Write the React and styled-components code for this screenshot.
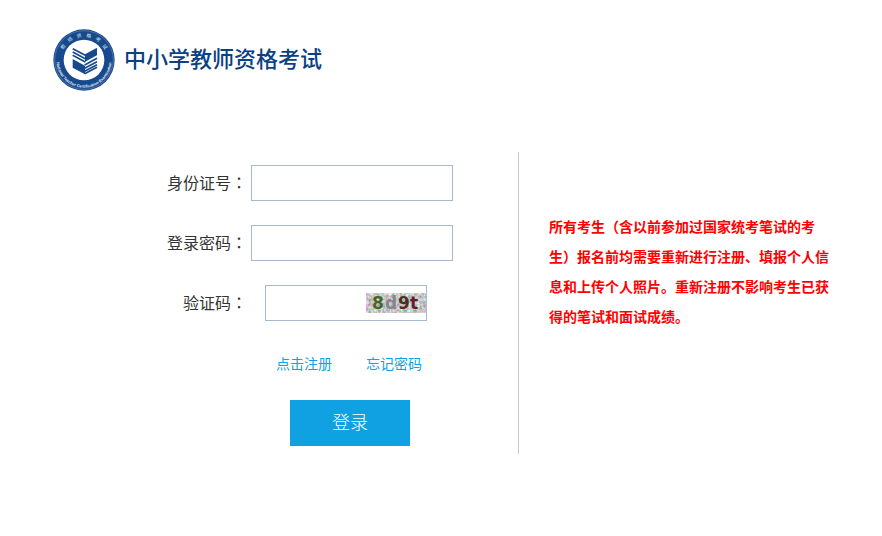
import React from "react";
import styled, { createGlobalStyle } from "styled-components";

const GlobalStyle = createGlobalStyle`
  * { box-sizing: border-box; }
  body {
    margin: 0;
    background: #fff;
    color: #333;
    font-family: "Noto Sans CJK SC", sans-serif;
    font-size: 16px;
  }
`;

const Header = styled.header`
  display: flex;
  align-items: center;
  gap: 9px;
  padding: 29px 53px 0;
`;

const Emblem = styled.svg`
  width: 62px;
  height: 62px;
  flex: none;
`;

const SiteTitle = styled.h1`
  margin: 0;
  padding-bottom: 6px;
  color: #0a4182;
  font-size: 22px;
  font-weight: 500;
  line-height: 32px;
`;

const Main = styled.main`
  display: grid;
  grid-template-columns: minmax(0, 519fr) minmax(0, 363fr);
  margin-top: 61px;
`;

const LoginForm = styled.form`
  display: flex;
  flex-direction: column;
  align-items: flex-end;
  gap: 24px;
  padding: 13px 65px 8px 16px;
  border-right: 1px solid #c8c8c8;
`;

const Field = styled.div`
  display: flex;
  align-items: center;
  gap: 4px;
  height: 36px;
`;

const Label = styled.label`
  padding-bottom: 2px;
  line-height: 24px;
  white-space: nowrap;
`;

const Colon = styled.span`
  font-family: "Noto Sans CJK TC", sans-serif;
`;

const Control = styled.div`
  display: flex;
  justify-content: ${(p) => (p.$narrow ? "center" : "flex-start")};
  width: 202px;
`;

const TextBox = styled.input`
  width: 100%;
  height: 36px;
  padding: 0 8px;
  border: 1px solid #a5bacf;
  border-radius: 0;
  background: #fff;
  font: inherit;
  outline: none;
`;

const CodeBox = styled.div`
  display: flex;
  align-items: center;
  width: 162px;
  height: 36px;
  margin-right: 12px;
  border: 1px solid #a5bacf;
`;

const CodeInput = styled.input`
  flex: 1;
  min-width: 0;
  height: 34px;
  padding: 0 8px;
  border: 0;
  background: transparent;
  font: inherit;
  outline: none;
`;

const CodeImage = styled.svg`
  width: 60px;
  height: 20px;
  flex: none;
  overflow: visible;
`;

const Actions = styled.div`
  display: flex;
  flex-direction: column;
  align-items: center;
  gap: 25px;
  width: 206px;
  padding-top: 6px;
`;

const Links = styled.nav`
  display: flex;
  gap: 34px;
  padding-right: 2px;
`;

const TextLink = styled.a`
  color: #0fa1e2;
  font-size: 14px;
  line-height: 24px;
  text-decoration: none;
`;

const SubmitButton = styled.button`
  width: 120px;
  height: 46px;
  padding: 0 0 4px;
  border: 0;
  background: #0fa1e2;
  color: #fff;
  font: inherit;
  font-size: 18px;
  font-weight: 300;
  cursor: pointer;
`;

const Notice = styled.p`
  align-self: start;
  max-width: 310px;
  margin: 59px 0 0;
  padding-left: 30px;
  color: #f00;
  font-size: 14px;
  font-weight: 700;
  line-height: 30px;
`;

const ringCharacters = [..."教师资格考试"];

function Logo() {
  return (
    <Emblem viewBox="0 0 186 186" role="img" aria-label="教师资格考试">
      <defs>
        <path id="ringBottom" d="M10 93a83 83 0 0 0 166 0" />
      </defs>
      <circle cx="93" cy="93" r="92" fill="#174a8c" />
      <circle cx="93" cy="93" r="88" fill="none" stroke="#6485b3" strokeWidth="2" />
      <circle cx="93" cy="93" r="61" fill="#fff" />
      <g fill="#d5e0ee" fontSize="15" textAnchor="middle">
        {ringCharacters.map((character, i) => (
          <text key={character} x="93" y="24" transform={`rotate(${(i - 2.5) * 23} 93 93)`}>
            {character}
          </text>
        ))}
      </g>
      <text fill="#e4ecf5" fontSize="12" fontWeight="700" fontFamily="Liberation Sans, sans-serif" textAnchor="middle">
        <textPath href="#ringBottom" startOffset="50%">National Teacher Certification Examination</textPath>
      </text>
      <g fill="#174a8c">
        <path d="M132 56 96 76V98L132 79Z" />
        <path d="M59 90 96 110V136L59 116Z" />
      </g>
      <g fill="none" stroke="#174a8c" strokeWidth="5">
        <path d="M59 59 97 79M59 69 97 89M59 79 97 99" />
        <path d="M132 88 95 108M132 98 95 118M132 107 95 127M132 115 95 134" />
      </g>
    </Emblem>
  );
}

function Captcha() {
  return (
    <CodeImage viewBox="0 0 60 20" role="img" aria-label="8d9t">
      <filter id="grain" x="0" y="0" width="100%" height="100%" colorInterpolationFilters="sRGB">
        <feTurbulence type="fractalNoise" baseFrequency="0.35" numOctaves="2" seed="7" />
        <feColorMatrix values="0.9 0 0 0 0.33  0 0.8 0 0 0.38  0.5 0 0.5 0 0.28  0 0 0 0 1" />
      </filter>
      <rect width="60" height="20" filter="url(#grain)" />
      <g fontFamily="DejaVu Sans, sans-serif" fontSize="17" fontWeight="700">
        <text x="6" y="16" fill="#4a6428">8</text>
        <text x="19" y="16" fill="#88838c">d</text>
        <text x="32" y="16" fill="#49301f">9</text>
        <text x="44" y="16" fill="#641c28">t</text>
      </g>
    </CodeImage>
  );
}

export default function App() {
  return (
    <>
      <GlobalStyle />
      <Header>
        <Logo />
        <SiteTitle>中小学教师资格考试</SiteTitle>
      </Header>
      <Main>
        <LoginForm onSubmit={(e) => e.preventDefault()}>
          <Field>
            <Label htmlFor="idNumber">身份证号<Colon>：</Colon></Label>
            <Control><TextBox id="idNumber" type="text" /></Control>
          </Field>
          <Field>
            <Label htmlFor="password">登录密码<Colon>：</Colon></Label>
            <Control><TextBox id="password" type="password" /></Control>
          </Field>
          <Field>
            <Label htmlFor="code">验证码<Colon>：</Colon></Label>
            <Control $narrow>
              <CodeBox>
                <CodeInput id="code" type="text" />
                <Captcha />
              </CodeBox>
            </Control>
          </Field>
          <Actions>
            <Links>
              <TextLink href="#register">点击注册</TextLink>
              <TextLink href="#forgot">忘记密码</TextLink>
            </Links>
            <SubmitButton type="submit">登录</SubmitButton>
          </Actions>
        </LoginForm>
        <Notice>
          所有考生（含以前参加过国家统考笔试的考生）报名前均需要重新进行注册、填报个人信息和上传个人照片。重新注册不影响考生已获得的笔试和面试成绩。
        </Notice>
      </Main>
    </>
  );
}
